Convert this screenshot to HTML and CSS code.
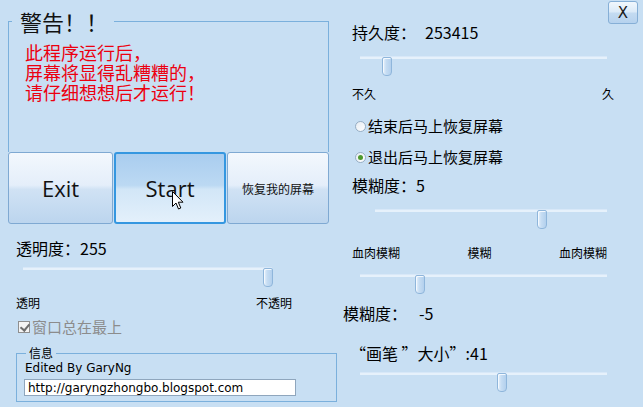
FILE: index.html
```html
<!DOCTYPE html>
<html lang="zh-CN">
<head>
    <meta charset="UTF-8">
    <title>屏幕乱糟糟</title>
    <link rel="stylesheet" href="styles.css">
</head>
<body>
    <div class="window">
        <button class="close-btn" type="button">X</button>

        <div class="col-left">
            <fieldset class="warning">
                <legend>警告！！</legend>
                <div class="warning-text">
                    此程序运行后，<br>
                    屏幕将显得乱糟糟的，<br>
                    请仔细想想后才运行！
                </div>
            </fieldset>

            <div class="btn-row">
                <button class="btn btn-exit" type="button">Exit</button>
                <button class="btn btn-start" type="button">Start
                    <svg class="cursor" width="12" height="19" viewBox="0 0 12 19">
                        <path d="M0.5 0.5 L0.5 15.5 L4 12 L6.5 18 L8.8 17 L6.3 11.2 L11 11.2 Z" fill="#fff" stroke="#000" stroke-width="1"/>
                    </svg>
                </button>
                <button class="btn btn-restore" type="button">恢复我的屏幕</button>
            </div>

            <div class="label label-alpha">透明度：255</div>
            <div class="slider slider-alpha">
                <div class="track"></div>
                <span class="thumb" style="left: 96.4%"></span>
            </div>
            <div class="ticks ticks-alpha">
                <span>透明</span>
                <span>不透明</span>
            </div>

            <label class="check">
                <span class="check-box"></span>窗口总在最上
            </label>

            <fieldset class="info">
                <legend>信息</legend>
                <div class="info-author">Edited By GaryNg</div>
                <input class="info-url" type="text" value="http://garyngzhongbo.blogspot.com" readonly>
            </fieldset>
        </div>

        <div class="col-right">
            <div class="label label-first">持久度：<span class="value-gap">253415</span></div>
            <div class="slider slider-wide slider-keep">
                <div class="track"></div>
                <span class="thumb" style="left: 8.9%"></span>
            </div>
            <div class="ticks ticks-keep">
                <span>不久</span>
                <span>久</span>
            </div>

            <div class="radio radio-first">
                <span class="radio-dot"></span>结束后马上恢复屏幕
            </div>
            <div class="radio radio-second">
                <span class="radio-dot checked"></span>退出后马上恢复屏幕
            </div>

            <div class="label label-blur">模糊度：5</div>
            <div class="slider slider-short slider-blur">
                <div class="track"></div>
                <span class="thumb" style="left: 69.8%"></span>
            </div>
            <div class="ticks ticks-blur">
                <span>血肉模糊</span>
                <span>模糊</span>
                <span>血肉模糊</span>
            </div>
            <div class="slider slider-wide slider-blur2">
                <div class="track"></div>
                <span class="thumb" style="left: 22.3%"></span>
            </div>

            <div class="label label-blur2">模糊度：<span class="value-gap wide">-5</span></div>
            <div class="label label-pen">“画笔 ”大小”:41</div>
            <div class="slider slider-wide slider-pen">
                <div class="track"></div>
                <span class="thumb" style="left: 55.5%"></span>
            </div>
        </div>
    </div>
</body>
</html>
```

FILE: styles.css
```css
:root {
    --bg-color: #c8dff3;
    --group-border: #7bb0dc;
    --track-color: #e6f1fb;
    --cjk: "Noto Sans CJK SC", sans-serif;
}

* {
    margin: 0;
    padding: 0;
    box-sizing: border-box;
}

body {
    background-color: var(--bg-color);
    font-family: var(--cjk);
    color: #000;
    width: 643px;
    height: 407px;
    overflow: hidden;
}

.window {
    position: relative;
    display: grid;
    grid-template-columns: 340px 303px;
    height: 407px;
}

.close-btn {
    position: absolute;
    top: 1px;
    right: 5px;
    width: 30px;
    height: 23px;
    border: 1px solid #86afd6;
    border-radius: 3px;
    background: linear-gradient(to bottom, #f1f7fd 0%, #dbeaf8 48%, #c4dbf1 52%, #b6d2ee 100%);
    font-family: "DejaVu Sans", sans-serif;
    font-size: 15px;
    color: #1a1a1a;
}

/* Coluna esquerda */
.col-left {
    padding-left: 8px;
}

.warning {
    margin-top: 8px;
    width: 321px;
    height: 144px;
    border: 1px solid var(--group-border);
    border-bottom: none;
}

.warning legend {
    margin-left: 3px;
    padding: 0 6px 0 8px;
    font-size: 22px;
    line-height: 26px;
    color: #111;
}

.warning-text {
    margin-top: 8px;
    padding-left: 16px;
    font-size: 18px;
    line-height: 20px;
    color: #ec0010;
}

.btn-row {
    display: flex;
    gap: 1px;
    width: 321px;
}

.btn {
    height: 72px;
    border: 1px solid #7fa9d2;
    border-radius: 3px;
    background: linear-gradient(to bottom, #f3f8fd 0%, #e4eefa 46%, #d0e2f4 52%, #bcd5ee 100%);
    font-family: "Open Sans", sans-serif;
    font-size: 22px;
    color: #111;
}

.btn-exit {
    width: 105px;
}

.btn-start {
    position: relative;
    width: 112px;
    border: 2px solid #3597e0;
    background: linear-gradient(to bottom, #a9cdef 0%, #bcd9f3 46%, #d2e6f7 52%, #e3f0fb 100%);
}

.btn-restore {
    width: 102px;
    font-family: var(--cjk);
    font-size: 12px;
}

.cursor {
    position: absolute;
    left: 56px;
    top: 37px;
}

.label {
    font-size: 16px;
    line-height: 20px;
}

.label-alpha {
    margin: 14px 0 0 8px;
}

.slider {
    position: relative;
    height: 21px;
}

.track {
    margin-top: 9px;
    height: 3px;
    background-color: var(--track-color);
    border-top: 1px solid #d8e8f8;
}

.thumb {
    position: absolute;
    top: 1px;
    width: 10px;
    height: 19px;
    border: 1px solid #8fb6db;
    border-radius: 2px 2px 4px 4px;
    background: linear-gradient(to right, #e8f2fc 0%, #c6ddf3 40%, #b3d0ed 100%);
    box-shadow: inset 1px 1px 0 #f4f9fe;
}

.slider-alpha {
    margin: 7px 0 0 15px;
    width: 249px;
}

.ticks {
    display: flex;
    justify-content: space-between;
    font-size: 12px;
    line-height: 16px;
}

.ticks-alpha {
    margin: 7px 0 0 8px;
    width: 276px;
}

.check {
    display: flex;
    align-items: center;
    margin: 6px 0 0 10px;
    font-size: 15px;
    line-height: 20px;
    color: #8c8c8c;
}

.check-box {
    position: relative;
    width: 12px;
    height: 12px;
    margin-right: 2px;
    border: 1px solid #8f8f8f;
    background-color: #f4f4f4;
}

.check-box::after {
    content: "";
    position: absolute;
    left: 3px;
    top: 0;
    width: 4px;
    height: 7px;
    border: solid #6e6e6e;
    border-width: 0 2px 2px 0;
    transform: rotate(40deg);
}

.info {
    margin: 8px 0 0 8px;
    width: 321px;
    height: 57px;
    padding: 0 8px;
    border: 1px solid var(--group-border);
}

.info legend {
    margin-left: 1px;
    padding: 0 3px;
    font-size: 12px;
    line-height: 16px;
}

.info-author {
    font-family: "DejaVu Sans", sans-serif;
    font-size: 12px;
    line-height: 15px;
}

.info-url {
    display: block;
    margin: 3px 0 0 -1px;
    width: 272px;
    height: 17px;
    padding: 0 3px;
    border: 1px solid #8fa6bd;
    background-color: #fff;
    font-family: "DejaVu Sans", sans-serif;
    font-size: 12px;
    line-height: 15px;
    color: #000;
    outline: none;
}

/* Coluna direita */
.col-right .label,
.col-right .ticks {
    margin-left: 12px;
}

.label-first {
    margin-top: 22px;
}

.value-gap {
    margin-left: 9px;
}

.value-gap.wide {
    margin-left: 12px;
}

.slider-wide {
    margin-left: 20px;
    width: 247px;
}

.slider-short {
    margin-left: 35px;
    width: 232px;
}

.slider-keep {
    margin-top: 14px;
}

.ticks-keep {
    margin-top: 9px;
    width: 262px;
}

.radio {
    display: flex;
    align-items: center;
    margin-left: 15px;
    font-size: 15px;
    line-height: 20px;
}

.radio-first {
    margin-top: 14px;
}

.radio-second {
    margin-top: 11px;
}

.radio-dot {
    position: relative;
    width: 11px;
    height: 11px;
    margin-right: 2px;
    border: 1px solid #97aec4;
    border-radius: 50%;
    background: linear-gradient(to bottom right, #e6ecf2, #ffffff);
}

.radio-dot.checked::after {
    content: "";
    position: absolute;
    left: 2px;
    top: 2px;
    width: 5px;
    height: 5px;
    border-radius: 50%;
    background-color: #4f9a2e;
}

.label-blur {
    margin-top: 8px;
}

.slider-blur {
    margin-top: 14px;
}

.ticks-blur {
    margin-top: 15px;
    width: 255px;
}

.slider-blur2 {
    margin-top: 13px;
}

.col-right .label-blur2 {
    margin: 8px 0 0 3px;
}

.col-right .label-pen {
    margin: 20px 0 0 10px;
}

.slider-pen {
    margin-top: 5px;
}
```
